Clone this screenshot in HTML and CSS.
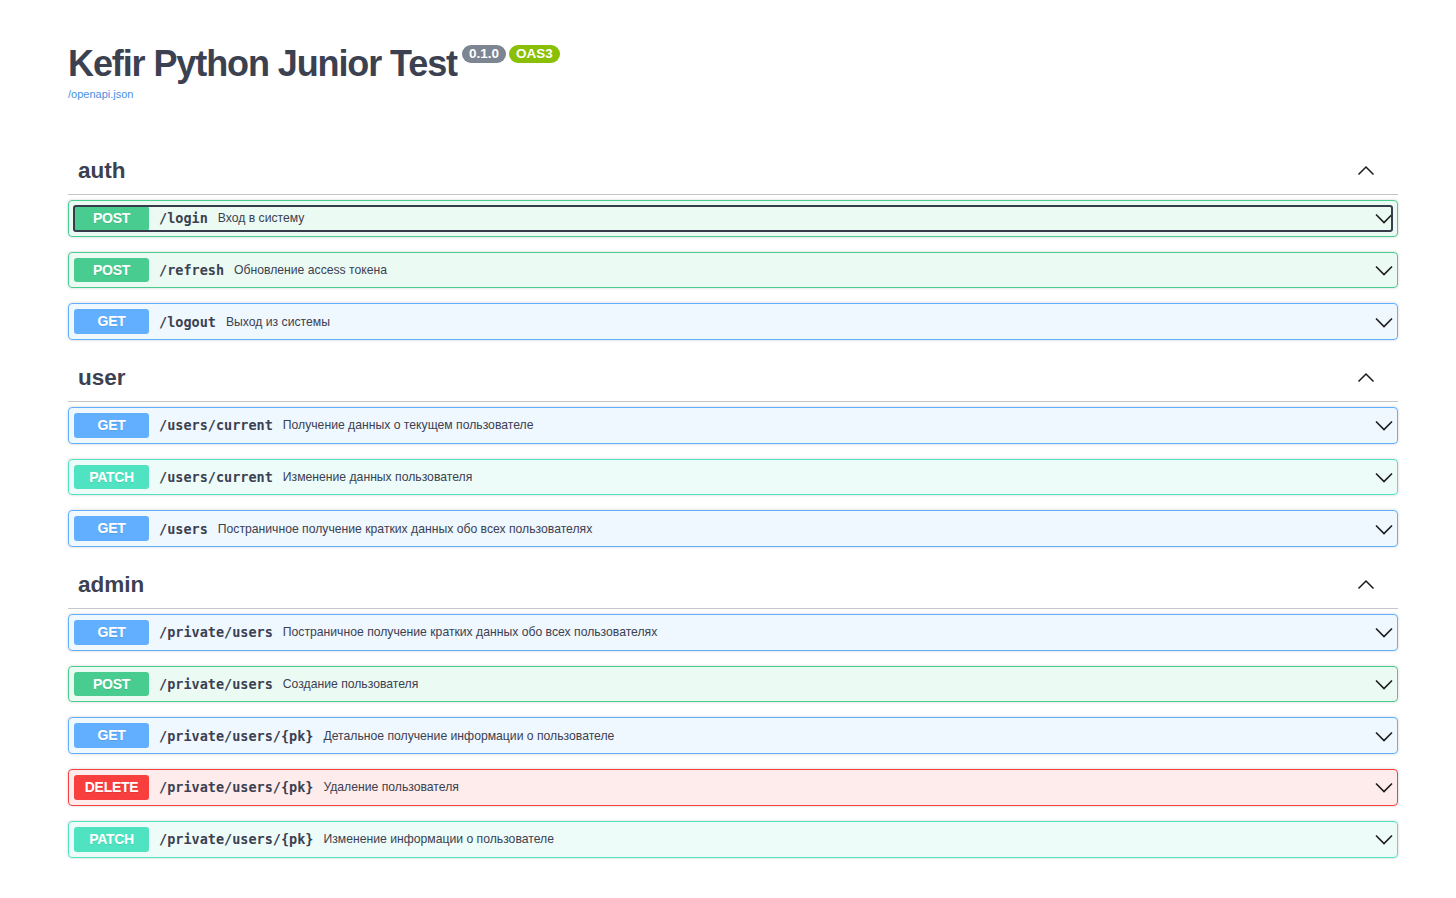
FILE: index.html
```html
<!DOCTYPE html>
<html lang="ru">
<head>
<meta charset="utf-8">
<title>Kefir Python Junior Test</title>
<link rel="stylesheet" href="styles.css">
</head>
<body>
<div class="wrapper">
  <div class="info">
    <h2 class="title"><span>Kefir Python Junior Test</span><span class="badge version">0.1.0</span><span class="badge oas">OAS3</span></h2>
    <a class="spec-link" href="#">/openapi.json</a>
  </div>

  <section class="tag-section">
    <h3 class="tag"><span>auth</span><svg class="tag-arrow" viewBox="0 0 20 20"><polyline points="2.5,13.5 10,6 17.5,13.5"/></svg></h3>
    <div class="opblock post"><div class="summary focused"><span class="method">POST</span><span class="path">/login</span><span class="desc">Вход в систему</span><svg class="arrow" viewBox="0 0 20 20"><polyline points="2,6.5 10,14.5 18,6.5"/></svg></div></div>
    <div class="opblock post"><div class="summary"><span class="method">POST</span><span class="path">/refresh</span><span class="desc">Обновление access токена</span><svg class="arrow" viewBox="0 0 20 20"><polyline points="2,6.5 10,14.5 18,6.5"/></svg></div></div>
    <div class="opblock get"><div class="summary"><span class="method">GET</span><span class="path">/logout</span><span class="desc">Выход из системы</span><svg class="arrow" viewBox="0 0 20 20"><polyline points="2,6.5 10,14.5 18,6.5"/></svg></div></div>
  </section>

  <section class="tag-section">
    <h3 class="tag"><span>user</span><svg class="tag-arrow" viewBox="0 0 20 20"><polyline points="2.5,13.5 10,6 17.5,13.5"/></svg></h3>
    <div class="opblock get"><div class="summary"><span class="method">GET</span><span class="path">/users/current</span><span class="desc">Получение данных о текущем пользователе</span><svg class="arrow" viewBox="0 0 20 20"><polyline points="2,6.5 10,14.5 18,6.5"/></svg></div></div>
    <div class="opblock patch"><div class="summary"><span class="method">PATCH</span><span class="path">/users/current</span><span class="desc">Изменение данных пользователя</span><svg class="arrow" viewBox="0 0 20 20"><polyline points="2,6.5 10,14.5 18,6.5"/></svg></div></div>
    <div class="opblock get"><div class="summary"><span class="method">GET</span><span class="path">/users</span><span class="desc">Постраничное получение кратких данных обо всех пользователях</span><svg class="arrow" viewBox="0 0 20 20"><polyline points="2,6.5 10,14.5 18,6.5"/></svg></div></div>
  </section>

  <section class="tag-section">
    <h3 class="tag"><span>admin</span><svg class="tag-arrow" viewBox="0 0 20 20"><polyline points="2.5,13.5 10,6 17.5,13.5"/></svg></h3>
    <div class="opblock get"><div class="summary"><span class="method">GET</span><span class="path">/private/users</span><span class="desc">Постраничное получение кратких данных обо всех пользователях</span><svg class="arrow" viewBox="0 0 20 20"><polyline points="2,6.5 10,14.5 18,6.5"/></svg></div></div>
    <div class="opblock post"><div class="summary"><span class="method">POST</span><span class="path">/private/users</span><span class="desc">Создание пользователя</span><svg class="arrow" viewBox="0 0 20 20"><polyline points="2,6.5 10,14.5 18,6.5"/></svg></div></div>
    <div class="opblock get"><div class="summary"><span class="method">GET</span><span class="path">/private/users/{pk}</span><span class="desc">Детальное получение информации о пользователе</span><svg class="arrow" viewBox="0 0 20 20"><polyline points="2,6.5 10,14.5 18,6.5"/></svg></div></div>
    <div class="opblock delete"><div class="summary"><span class="method">DELETE</span><span class="path">/private/users/{pk}</span><span class="desc">Удаление пользователя</span><svg class="arrow" viewBox="0 0 20 20"><polyline points="2,6.5 10,14.5 18,6.5"/></svg></div></div>
    <div class="opblock patch"><div class="summary"><span class="method">PATCH</span><span class="path">/private/users/{pk}</span><span class="desc">Изменение информации о пользователе</span><svg class="arrow" viewBox="0 0 20 20"><polyline points="2,6.5 10,14.5 18,6.5"/></svg></div></div>
  </section>
</div>
</body>
</html>
```
FILE: styles.css
```css
* { box-sizing: border-box; }
body {
  margin: 0;
  background: #fff;
  font-family: "Liberation Sans", Arial, sans-serif;
  color: #3b4151;
}
.wrapper {
  width: 1330px;
  margin-left: 68px;
  padding-top: 40px;
}
.info {
  margin-bottom: 46px;
}
.title {
  margin: 0 0 -2px;
  padding-top: 2px;
  font-size: 36px;
  line-height: 44px;
  font-weight: 700;
  letter-spacing: -1.1px;
  color: #3b4151;
}
.badge {
  display: inline-block;
  vertical-align: top;
  position: relative;
  top: 3px;
  padding: 2px 7px;
  border-radius: 57px;
  font-size: 13.5px;
  line-height: 13.5px;
  font-weight: 700;
  letter-spacing: 0;
  color: #fff;
}
.badge.version { background: #7d8492; margin-left: 5px; }
.badge.oas { background: #89bf04; margin-left: 3px; }
.spec-link {
  display: inline-block;
  font-size: 11px;
  line-height: 12px;
  color: #4990e2;
  text-decoration: none;
}
.tag-section { margin: 0; }
.tag {
  display: flex;
  align-items: center;
  justify-content: space-between;
  margin: 0 0 5px;
  padding: 10px 20px 10px 10px;
  font-size: 22.5px;
  line-height: 25.75px;
  font-weight: 700;
  color: #3b4151;
  border-bottom: 1px solid rgba(59, 65, 81, .3);
}
.tag-arrow {
  width: 20px;
  height: 20px;
  margin-right: 2px;
  fill: none;
  stroke: #1b1b1b;
  stroke-width: 1.5;
}
.opblock {
  margin: 0 0 15px;
  border: 1px solid #000;
  border-radius: 4px;
  box-shadow: 0 0 3px rgba(0, 0, 0, .19);
}
.summary {
  display: flex;
  align-items: center;
  padding: 5px;
  border-radius: 4px;
}
.summary.focused {
  outline: 2.5px solid #363c4a;
  outline-offset: -6.5px;
  border-radius: 7px;
}
.method {
  flex: none;
  width: 75px;
  padding: 6px 0;
  line-height: 12.75px;
  font-size: 14px;
  font-weight: 700;
  text-align: center;
  color: #fff;
  border-radius: 3px;
  text-shadow: 0 1px 0 rgba(0, 0, 0, .1);
  letter-spacing: -0.3px;
}
.path {
  flex: none;
  padding: 0 10px;
  font-family: "DejaVu Sans Mono", "Liberation Mono", monospace;
  font-size: 13.5px;
  font-weight: 700;
  color: #3b4151;
}
.desc {
  flex: 1;
  font-size: 12.2px;
  color: #3b4151;
}
.arrow {
  flex: none;
  width: 20px;
  height: 20px;
  margin-right: -2px;
  fill: none;
  stroke: #1b1b1b;
  stroke-width: 1.6;
}
.post { border-color: #49cc90; background: rgba(73, 204, 144, .1); }
.post .method { background: #49cc90; }
.get { border-color: #61affe; background: rgba(97, 175, 254, .1); }
.get .method { background: #61affe; }
.patch { border-color: #50e3c2; background: rgba(80, 227, 194, .1); }
.patch .method { background: #50e3c2; }
.delete { border-color: #f93e3e; background: rgba(249, 62, 62, .1); }
.delete .method { background: #f93e3e; }
```
